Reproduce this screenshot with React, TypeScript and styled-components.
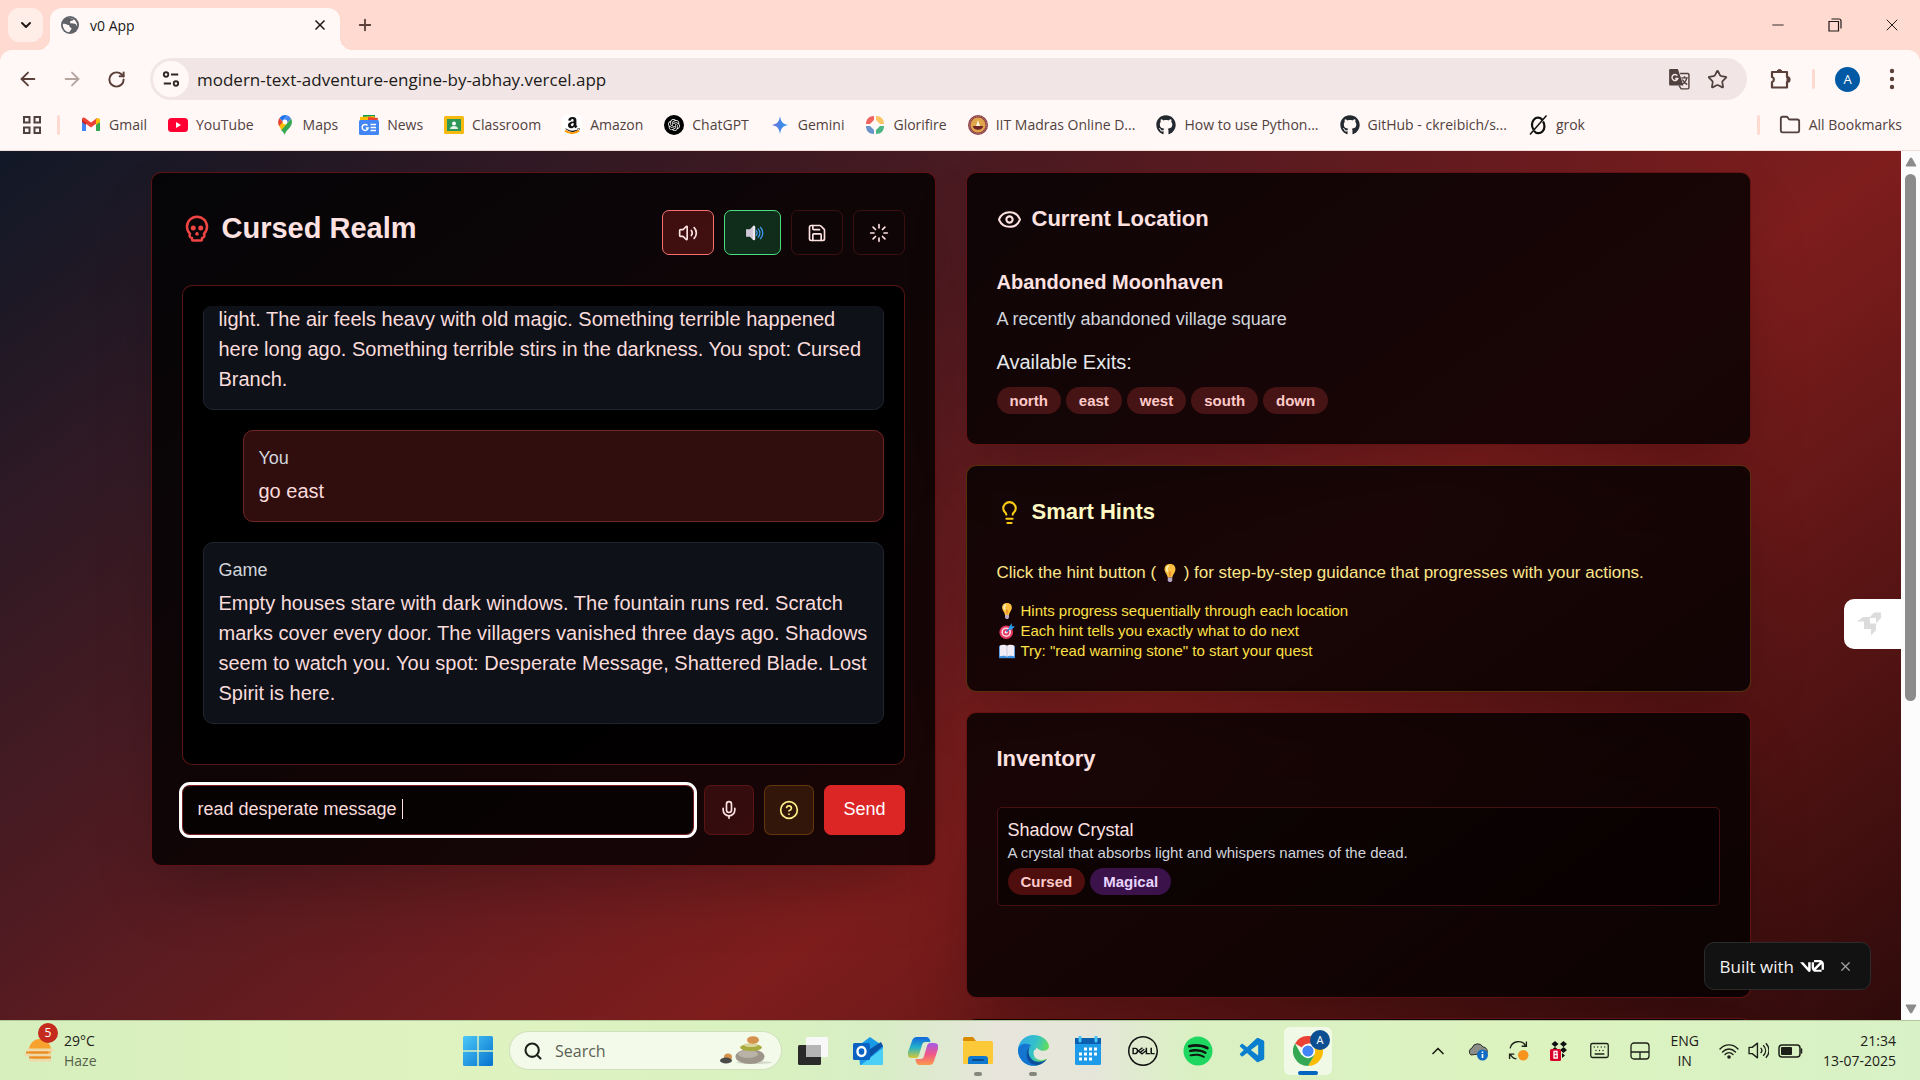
import React from 'react';
import styled, { createGlobalStyle, css } from 'styled-components';
import {
  ArrowLeft, ArrowRight, ChevronDown, ChevronUp, CircleQuestionMark, Eye, Folder, Keyboard, Lightbulb, Loader, Mic,
  Minus, Plus, RotateCw, Save, Search, Skull, Star, Volume2, X,
} from 'lucide-react';
import { FaAmazon, FaGithub, FaSpotify } from 'react-icons/fa';
import { SiDell, SiOpenai } from 'react-icons/si';
import { VscVscode } from 'react-icons/vsc';

const GlobalStyle = createGlobalStyle`
  *, *::before, *::after { box-sizing: border-box; }
  body { margin: 0; overflow: hidden; font-family: "Liberation Sans", Arial, sans-serif; }
  h1, h2, h3, p, ul { margin: 0; padding: 0; }
  ul { list-style: none; }
  button, input { font: inherit; color: inherit; margin: 0; }
  button { padding: 0; border: 0; background: none; cursor: pointer; }
  a { color: inherit; text-decoration: none; }
  svg { display: block; flex: none; }
`;

const uiFont = '"Segoe UI", "Open Sans", "Noto Sans", sans-serif';

const Screen = styled.div`
  height: 100vh;
  display: flex;
  flex-direction: column;
`;

/* ---------- Browser ---------- */

const Browser = styled.header`
  font-family: ${uiFont};
  background: #ffdad1;
  color: #51413e;
`;

const TabStrip = styled.div`
  height: 50px;
  display: flex;
  align-items: flex-end;
  padding-left: 8px;
`;

const TabSearch = styled.button`
  width: 35px;
  height: 34px;
  margin: 0 7px 8px 0;
  border-radius: 11px;
  background: #ffede8;
  color: #201a19;
  display: grid;
  place-items: center;
`;

const Tab = styled.div`
  position: relative;
  width: 290px;
  height: 42px;
  padding: 0 12px 8px 11px;
  border-radius: 12px 12px 0 0;
  background: #fff8f6;
  color: #201a19;
  display: flex;
  align-items: center;
  gap: 11px;
  font-size: 14px;

  &::before, &::after {
    content: '';
    position: absolute;
    bottom: 0;
    width: 12px;
    height: 12px;
  }
  &::before { left: -12px; background: radial-gradient(circle at 0 0, #ffdad1 12px, #fff8f6 12px); }
  &::after { right: -12px; background: radial-gradient(circle at 100% 0, #ffdad1 12px, #fff8f6 12px); }
`;

const TabTitle = styled.span`flex: 1;`;

const PlainButton = styled.button<{ $w?: number; $h?: number }>`
  display: grid;
  place-items: center;
  width: ${(p) => p.$w ?? 44}px;
  height: ${(p) => p.$h ?? 42}px;
`;

const WindowButtons = styled.div`
  margin-left: auto;
  display: flex;
  color: #201a19;
`;

const Toolbar = styled.div`
  height: 58px;
  border-radius: 12px 12px 0 0;
  background: #fff8f6;
  color: #5b403a;
  display: flex;
  align-items: center;
  padding: 0 6px;
`;

const Omnibox = styled.div`
  flex: 1;
  height: 42px;
  margin: 0 11px 0 12px;
  padding: 0 16px 0 3px;
  border-radius: 21px;
  background: #f1e6e5;
  display: flex;
  align-items: center;
  gap: 8px;
`;

const SiteInfo = styled.button`
  width: 36px;
  height: 36px;
  border-radius: 50%;
  background: #fff8f6;
  display: grid;
  place-items: center;
`;

const Address = styled.input`
  flex: 1;
  min-width: 0;
  border: 0;
  outline: 0;
  padding: 0;
  background: transparent;
  color: #201a19;
  font-size: 17px;
`;

const Divider = styled.span`
  width: 3px;
  height: 20px;
  border-radius: 2px;
  background: #ffdad1;
`;

const Account = styled.div`
  display: flex;
  align-items: center;
  gap: 20px;
  padding: 0 10px;
`;

const Profile = styled.button`
  width: 25px;
  height: 25px;
  border-radius: 50%;
  background: #0059a4;
  color: #fff;
  font-size: 13px;
`;

const Bookmarks = styled.nav`
  height: 43px;
  padding: 0 18px 8px 22px;
  background: #fff8f6;
  border-bottom: 1px solid #f3dcd6;
  display: flex;
  align-items: center;
`;

const BookmarkList = styled.div`
  flex: 1;
  display: flex;
  align-items: center;
  gap: 21px;
  margin-left: 15px;
`;

const BookmarkEnd = styled.div`
  display: flex;
  align-items: center;
  gap: 19px;
`;

const Bookmark = styled.a`
  display: flex;
  align-items: center;
  gap: 8px;
  font-size: 14px;
  line-height: 20px;
  white-space: nowrap;
`;

/* ---------- Page ---------- */

const Viewport = styled.div`
  flex: 1;
  min-height: 0;
  display: flex;
  position: relative;
`;

const Realm = styled.main`
  flex: 1;
  overflow: hidden;
  padding: 21px 20px;
  background: linear-gradient(to bottom right, #111827, #7f1d1d, #000) 0 0 / 100% 1378px no-repeat #000;
`;

const Columns = styled.div`
  max-width: 1600px;
  margin: 0 auto;
  display: grid;
  grid-template-columns: 1fr 1fr;
  align-items: start;
  gap: 30px;
`;

const Side = styled.div`
  display: grid;
  gap: 20px;
`;

const Card = styled.section<{ $tone?: 'hint' }>`
  padding: 30px;
  border: 1px solid ${(p) => (p.$tone === 'hint' ? 'rgba(133, 77, 14, 0.6)' : 'rgba(153, 27, 27, 0.6)')};
  border-radius: 10px;
  background: rgba(0, 0, 0, 0.8);
  box-shadow: 0 31px 62px -15px rgba(0, 0, 0, 0.25);
  color: #fee2e2;
`;

const GameHeader = styled.div`
  height: 52px;
  margin-bottom: 30px;
  display: flex;
  justify-content: space-between;
`;

const GameTitle = styled.h1`
  display: flex;
  align-items: center;
  gap: 10px;
  font-size: 29px;
  line-height: 50px;
  height: 50px;
  svg { color: #ef4444; }
`;

const Controls = styled.div`
  display: flex;
  align-items: flex-end;
  gap: 10px;
`;

type Tone = 'idle' | 'on' | 'voice' | 'mic' | 'help' | 'send';

const tones: Record<Tone, ReturnType<typeof css>> = {
  idle: css`border-color: rgba(127, 29, 29, 0.4); color: #fee2e2;`,
  on: css`border-color: #f87171; background: rgba(127, 29, 29, 0.45); color: #fee2e2;`,
  voice: css`border-color: #4ade80; background: rgba(20, 83, 45, 0.5);`,
  mic: css`border-color: rgba(127, 29, 29, 0.5); background: rgba(127, 29, 29, 0.3); color: #fee2e2;`,
  help: css`border-color: rgba(133, 77, 14, 0.6); background: rgba(113, 63, 18, 0.3); color: #fef08a;`,
  send: css`border-color: #dc2626; background: #dc2626; color: #fff;`,
};

const Action = styled.button<{ $tone: Tone; $tall?: boolean }>`
  height: ${(p) => (p.$tall ? 50 : 45)}px;
  padding: 0 ${(p) => (p.$tall ? 14 : 15)}px;
  min-width: ${(p) => (p.$tall ? 50 : 52)}px;
  border: 1px solid transparent;
  border-radius: 7px;
  display: grid;
  place-items: center;
  font-size: 18px;
  ${(p) => tones[p.$tone]}
`;

const SendLabel = styled.span`padding: 0 4px 2px;`;

const Log = styled.div`
  height: 480px;
  padding: 20px;
  border: 1px solid rgba(127, 29, 29, 0.7);
  border-radius: 10px;
  background: rgba(0, 0, 0, 0.9);
  margin-bottom: 20px;
`;

const LogScroller = styled.div`
  height: 100%;
  overflow: hidden;
  border-radius: 8px;
  display: flex;
  flex-direction: column;
  justify-content: flex-end;
  gap: 20px;
  padding-bottom: 20px;
`;

const Message = styled.article<{ $own?: boolean }>`
  flex: none;
  margin-left: ${(p) => (p.$own ? 40 : 0)}px;
  padding: 15px 12px 15px 15px;
  border: 1px solid ${(p) => (p.$own ? '#702626' : '#20262f')};
  border-radius: 10px;
  background: ${(p) => (p.$own ? '#310e0e' : '#0e1118')};
  color: #fadcdc;
  font-size: 20px;
  line-height: 30px;
`;

const Speaker = styled.div`
  margin-bottom: 5px;
  color: #d1d5db;
  font-size: 18px;
  line-height: 25px;
`;

const CommandRow = styled.form`
  display: flex;
  gap: 10px;
`;

const CommandField = styled.div`
  position: relative;
  flex: 1;
  display: flex;
`;

const Command = styled.input`
  width: 100%;
  height: 50px;
  padding: 0 15px 2px;
  border: 1px solid #7f1d1d;
  border-radius: 8px;
  background: rgba(0, 0, 0, 0.6);
  color: #fadcdc;
  font-size: 18px;
  caret-color: transparent;
  outline: 3px solid #fff;
`;

const Caret = styled.span`
  position: absolute;
  left: 220px;
  top: 14px;
  width: 1px;
  height: 20px;
  background: #fee2e2;
`;

const CardTitle = styled.h2<{ $tone?: 'hint' }>`
  display: flex;
  align-items: center;
  gap: 10px;
  margin-bottom: 32px;
  font-size: 22px;
  line-height: 32px;
  color: ${(p) => (p.$tone === 'hint' ? '#fef9c3' : '#fee2e2')};
  svg { color: ${(p) => (p.$tone === 'hint' ? '#facc15' : '#fee2e2')}; }
`;

const Place = styled.h3`
  font-size: 20px;
  line-height: 30px;
  margin-bottom: 10px;
`;

const PlaceText = styled.p`
  font-size: 18px;
  line-height: 25px;
  margin-bottom: 15px;
  color: #d1d5db;
`;

const ExitsLabel = styled.p`
  font-size: 20px;
  line-height: 30px;
  margin-bottom: 10px;
  color: #e5e7eb;
`;

const Badges = styled.div`
  display: flex;
  gap: 5px;
`;

const Badge = styled.span<{ $tone?: 'cursed' | 'magic' }>`
  padding: 0 13px;
  border-radius: 14px;
  font-size: 15px;
  font-weight: 700;
  line-height: 27px;
  background: ${(p) => (p.$tone === 'cursed' ? '#4f0e0e' : p.$tone === 'magic' ? '#3b1249' : '#471415')};
  color: ${(p) => (p.$tone === 'magic' ? '#e9d5ff' : '#fecaca')};
`;

const HintText = styled.p`
  display: flex;
  align-items: center;
  font-size: 17px;
  line-height: 26px;
  margin-bottom: 15px;
  color: #fde68a;
  white-space: pre;
`;

const HintItem = styled.li`
  display: flex;
  align-items: center;
  gap: 6px;
  padding-left: 2px;
  font-size: 15px;
  line-height: 20px;
  color: #fde047;
`;

const Items = styled.div`min-height: 160px;`;

const Item = styled.article`
  padding: 10px;
  border: 1px solid rgba(127, 29, 29, 0.5);
  border-radius: 5px;
  background: rgba(0, 0, 0, 0.4);
`;

const ItemName = styled.h3`
  font-size: 18px;
  font-weight: 400;
  line-height: 25px;
`;

const ItemText = styled.p`
  margin-bottom: 5px;
  font-size: 15px;
  line-height: 20px;
  color: #d1d5db;
`;

const Scrollbar = styled.div`
  width: 19px;
  background: #fcfcfc;
  color: #8b8b8b;
  display: flex;
  flex-direction: column;
  align-items: center;
  padding: 6px 0;
`;

const ScrollTrack = styled.div`
  flex: 1;
  padding: 7px 0 6px;
`;

const ScrollThumb = styled.div`
  width: 11px;
  height: 64%;
  border-radius: 6px;
  background: #8b8b8b;
`;

const RocketTab = styled.button`
  position: absolute;
  right: 19px;
  top: 448px;
  width: 57px;
  height: 50px;
  border-radius: 10px 0 0 10px;
  background: #fff;
  display: grid;
  place-items: center start;
  padding-left: 13px;
`;

const BuiltWith = styled.div`
  position: absolute;
  right: 49px;
  bottom: 30px;
  height: 48px;
  padding: 0 17px 0 15px;
  border: 1px solid #2b2b2b;
  border-radius: 10px;
  background: #121212;
  color: #f2f2f2;
  font-family: ${uiFont};
  font-size: 17px;
  display: flex;
  align-items: center;
  gap: 6px;
`;

const Dismiss = styled.button`
  margin-left: 8px;
  color: #a0a0a0;
`;

/* ---------- Taskbar ---------- */

const Taskbar = styled.footer`
  height: 60px;
  border-top: 1px solid #b3c79c;
  background: linear-gradient(90deg, #d6efbd 0, #dff3c0 22%, #d9f1c0 40%, #d8edc6 46%, #e7e5dc 52%, #e5e6d9 57%, #daf0c3 62%, #dcf3bf 80%, #d8f1c6 100%);
  font-family: ${uiFont};
  font-size: 14px;
  line-height: 20px;
  color: #1d2018;
  display: grid;
  grid-template: 59px / 454px 1fr auto;
  align-items: center;
`;

const Weather = styled.button`
  justify-self: start;
  display: flex;
  align-items: center;
  gap: 8px;
  padding-left: 24px;
  text-align: left;
`;

const WeatherIcon = styled.span`position: relative;`;

const Count = styled.span`
  position: absolute;
  left: 14px;
  top: -12px;
  width: 20px;
  height: 20px;
  border-radius: 50%;
  background: #c42b1c;
  color: #fff;
  font-size: 12px;
  text-align: center;
`;

const Muted = styled.span`color: #55604a;`;

const Apps = styled.div`
  display: flex;
  align-items: center;
  gap: 7px;
`;

const AppButton = styled.button<{ $active?: boolean; $open?: boolean }>`
  position: relative;
  width: 48px;
  height: 48px;
  border-radius: 6px;
  background: ${(p) => (p.$active ? 'rgba(255, 255, 255, 0.6)' : 'transparent')};
  display: grid;
  place-items: center;

  ${(p) =>
    (p.$active || p.$open) &&
    css`
      &::after {
        content: '';
        position: absolute;
        left: 50%;
        bottom: ${p.$active ? 0 : -1}px;
        width: ${p.$active ? 20 : 8}px;
        height: 4px;
        border-radius: 2px;
        transform: translateX(-50%);
        background: ${p.$active ? '#0067c0' : '#83877c'};
      }
    `}
`;

const ProfileBadge = styled.span`
  position: absolute;
  right: 2px;
  top: 3px;
  width: 20px;
  height: 20px;
  border-radius: 50%;
  background: #0b4f92;
  color: #fff;
  font-size: 11px;
`;

const SearchPill = styled.label`
  width: 273px;
  height: 39px;
  padding: 0 9px 0 13px;
  border: 1px solid #cfe0ba;
  border-radius: 20px;
  background: #f4faea;
  display: flex;
  align-items: center;
  gap: 12px;
`;

const SearchInput = styled.input`
  flex: 1;
  min-width: 0;
  padding: 0;
  border: 0;
  outline: 0;
  background: transparent;
  font-size: 16px;
  &::placeholder { color: #5b6154; opacity: 1; }
`;

const Tray = styled.div`
  display: flex;
  align-items: center;
  gap: 20px;
  padding-right: 24px;
`;

const TrayGroup = styled.div`
  display: flex;
  align-items: center;
  gap: 9px;
`;

const TwoLines = styled.div<{ $end?: boolean }>`
  text-align: ${(p) => (p.$end ? 'right' : 'center')};
  white-space: pre;
`;

/* ---------- Drawings ---------- */

const Svg = ({ w = 20, h, vb = '0 0 20 20', children }: { w?: number; h?: number; vb?: string; children: React.ReactNode }) => (
  <svg width={w} height={h ?? w} viewBox={vb} fill="none" aria-hidden="true">{children}</svg>
);

const Globe = () => (
  <Svg w={18}>
    <circle cx="10" cy="10" r="10" fill="#5f6368" />
    <path d="M2 9c3-1 4 1 6 1s1 3 3 3-1 4-2 5C5 18 2 14 2 9zM8 2c2 0 5 0 6 2-1 2-4 1-4 3s4 1 6 2 1 3 2 2c0-5-4-9-10-9z" fill="#fff8f6" />
  </Svg>
);

const Gmail = () => (
  <Svg>
    <path d="M1 5v11h4V8z" fill="#4285f4" /><path d="M15 8v8h4V5z" fill="#34a853" />
    <path d="M1 6V4c0-1.600 2-2 3-1l6 4.500L16 3v5l-6 4.500L4 8z" fill="#ea4335" />
    <path d="M15 4c1.500-1.500 4-1 4 1v2l-4 3z" fill="#fbbc04" /><path d="M1 5l4 3v2L1 7z" fill="#c5221f" />
  </Svg>
);
const YouTube = () => (
  <Svg><rect y="3" width="20" height="14" rx="3.500" fill="#ff0033" /><path d="M8 7l5 3-5 3z" fill="#fff" /></Svg>
);
const Maps = () => (
  <Svg>
    <path d="M10 20c0-5 7-7 7-13a7 7 0 0 0-1-3.500L6 15c2 2 3 3 4 5z" fill="#34a853" />
    <path d="M4 10c.5 2 1.500 3.500 2.500 5L14 6l-4-2z" fill="#fbbc04" />
    <path d="M4.500 3L8 7l-4 4C2.500 8 3 5 4.500 3z" fill="#ea4335" />
    <path d="M4.500 3A7 7 0 0 1 12 .3L7.500 6z" fill="#1a73e8" /><path d="M12 .3a7 7 0 0 1 4 3.200L12 8 8.500 5z" fill="#4285f4" />
    <circle cx="10" cy="7" r="2.400" fill="#fff" />
  </Svg>
);
const News = () => (
  <Svg>
    <path d="M4 0h12v6H4z" fill="#0c9d58" /><path d="M1 2l14-1 3 5H1z" fill="#fbbc04" /><path d="M9 2l10 1-1 5H9z" fill="#ea4335" />
    <rect y="5" width="20" height="15" rx="1.500" fill="#4285f4" />
    <path d="M8.500 10.500a3 3 0 1 0 .6 2.500H6.800M11.500 9.500H17M11.500 12.500H17M11.500 15.500H17" stroke="#fff" strokeWidth="1.500" />
  </Svg>
);
const Classroom = () => (
  <Svg>
    <rect y="1" width="20" height="18" rx="1.500" fill="#f5b912" /><rect x="3" y="4" width="14" height="12" fill="#2e9957" />
    <circle cx="10" cy="8.500" r="1.900" fill="#fff" /><path d="M6 14c0-4 8-4 8 0z" fill="#e6f4ea" />
  </Svg>
);
const ChatGpt = () => (
  <Svg><circle cx="10" cy="10" r="10" fill="#000" /><g color="#fff"><SiOpenai x="4" y="4" size={12} /></g></Svg>
);
const Gemini = () => (
  <Svg>
    <defs><linearGradient id="gem" x1="0" y1="10" x2="20" y2="10" gradientUnits="userSpaceOnUse"><stop stopColor="#8a6bd8" /><stop offset=".6" stopColor="#3b8be8" /><stop offset="1" stopColor="#4cb0f0" /></linearGradient></defs>
    <path d="M10 1c.8 6 3 8.200 9 9-6 .8-8.200 3-9 9-.8-6-3-8.200-9-9 6-.8 8.200-3 9-9z" fill="url(#gem)" />
  </Svg>
);
const Glorifire = () => (
  <Svg>
    <path d="M9 1v4L5 9H1c0-5 3-8 8-8z" fill="#ee6560" /><path d="M11 1c5 0 8 3 8 8h-4l-4-4z" fill="#fbc566" />
    <path d="M1 11h4l4 4v4c-5 0-8-3-8-8z" fill="#6993c9" /><path d="M19 11c0 5-3 8-8 8v-4l4-4z" fill="#4cb581" />
  </Svg>
);
const Iit = () => (
  <Svg>
    <circle cx="10" cy="10" r="10" fill="#8c3f45" /><circle cx="10" cy="10" r="7.500" fill="#e0a54a" />
    <path d="M5 11h10c0 5-10 5-10 0z" fill="#702427" /><path d="M8 11l2-6 2 6z" fill="#fff3d8" /><circle cx="10" cy="10" r="8.500" stroke="#c9908a" strokeDasharray="1 1" />
  </Svg>
);
const Grok = () => (
  <Svg>
    <path d="M14.500 5A5.500 6.500 0 0 0 5.500 14.500M6 15.800A5.500 6.500 0 0 0 15 6.500" stroke="#111" strokeWidth="2.200" />
    <path d="M2 19.500L18.500 .5" stroke="#111" strokeWidth="1.500" />
  </Svg>
);
const AmazonIcon = () => (
  <Svg><rect width="20" height="20" rx="4" fill="#fff" /><g color="#111"><FaAmazon x="2" y="1" size={17} /></g><path d="M3 15.500c4 3.500 10 3.500 14 0" stroke="#f90" strokeWidth="2" /></Svg>
);

const AppsGrid = () => (
  <Svg><path d="M2 2h5.500v5.500H2zM12.500 2H18v5.500h-5.500zM2 12.500h5.500V18H2zM12.500 12.500H18V18h-5.500z" stroke="#51413e" strokeWidth="2" /></Svg>
);
const Tune = () => (
  <Svg w={18}><g stroke="#2f2523" strokeWidth="2"><circle cx="4.500" cy="5" r="2.500" /><path d="M10 5h8M2 15h8" /><circle cx="15.500" cy="15" r="2.500" /></g></Svg>
);
const Translate = () => (
  <Svg w={22}>
    <path d="M2 1h7l5 15H2a1 1 0 0 1-1-1V2a1 1 0 0 1 1-1z" fill="#51413e" />
    <path d="M8.500 7a2.700 2.700 0 1 0 .4 2.500H6.500" stroke="#f1e6e5" strokeWidth="1.300" />
    <path d="M11 5h7a1 1 0 0 1 1 1v12a1 1 0 0 1-1 1h-6l-2-3M12 9h6M15 7.500V9M17 9c-.5 3-2.500 5-4.500 6M13 10.500c1 2 2.500 3.500 4.500 4.500" stroke="#51413e" strokeWidth="1.300" />
  </Svg>
);
const Puzzle = () => (
  <Svg w={24} vb="0 0 24 24">
    <path d="M4 5h15v5a2.300 2.300 0 0 1 0 5v5.500H4V15a2.600 2.600 0 0 0 0-5z" stroke="#5b403a" strokeWidth="2.200" strokeLinejoin="round" />
    <path d="M9 5a2.500 2.500 0 0 1 5 0zM19 10a2.500 2.500 0 0 1 0 5z" fill="#5b403a" stroke="#5b403a" />
  </Svg>
);
const Dots = () => (
  <Svg w={24} vb="0 0 24 24"><g fill="#5b403a"><circle cx="12" cy="4" r="2.200" /><circle cx="12" cy="12" r="2.200" /><circle cx="12" cy="20" r="2.200" /></g></Svg>
);
const Restore = () => (
  <Svg w={14} vb="0 0 14 14"><path d="M1 3.500h9.500V13H1zM3.500 1H11a2 2 0 0 1 2 2v7.500" stroke="#201a19" strokeWidth="1.200" /></Svg>
);

const Speaker3d = () => (
  <Svg w={25} h={20} vb="-4 -2 33 24">
    <path d="M4 5h5l4-4c2-1.500 3 0 3 1v16c0 1-1 2.500-3 1l-4-4H4z" fill="#cfc6d6" />
    <path d="M13 1c2-1.500 3 0 3 1v16c0 1-1 2.500-3 1z" fill="#ece7f1" />
    <path d="M17.500 7c1.500 1.500 1.500 4.500 0 6M20 4.500c3 3 3 8 0 11M23 2.500c4 4 4 11 0 15" stroke="#3f9bf2" strokeWidth="1.700" strokeLinecap="round" />
  </Svg>
);
const Bulb = ({ size = 16 }: { size?: number }) => (
  <Svg w={size}>
    <path d="M10 0c4.500 0 6.500 3 6 7-.5 3-3 4.500-3.500 8h-5C7 11.500 4.500 10 4 7c-.5-4 1.500-7 6-7z" fill="#fdbf3f" />
    <path d="M8 2.500C6 4 6 7 7.500 8" stroke="#fff2b8" strokeWidth="2" strokeLinecap="round" /><path d="M9 8l1 6 1-6" stroke="#e98b2a" />
    <path d="M7.500 15h5v3.500L11 20H9l-1.500-1.500z" fill="#b7a9c6" />
  </Svg>
);
const Target = () => (
  <Svg w={16}>
    <circle cx="9" cy="11.500" r="8.500" fill="#e8375f" /><circle cx="9" cy="11.500" r="6" fill="#f6dbe8" /><circle cx="9" cy="11.500" r="4" fill="#e8375f" /><circle cx="9" cy="11.500" r="1.700" fill="#fff" />
    <path d="M9 11.500L16 4" stroke="#1c72c9" strokeWidth="1.500" /><path d="M12.500 5L16 0v4l4 .5-4.500 4-3-.5z" fill="#2b9df0" />
  </Svg>
);
const Book = () => (
  <Svg w={16}>
    <path d="M0 4h20v15H0z" fill="#3d8fe0" /><path d="M1 3c3-1 7-1 9 .5V17c-2-1.500-6-1.500-9-.5zM19 3c-3-1-7-1-9 .5V17c2-1.500 6-1.500 9-.5z" fill="#f1ebf6" /><path d="M10 3.500V17" stroke="#c7bdd6" />
  </Svg>
);
const Rocket = () => (
  <Svg w={24} vb="0 0 24 24">
    <path fillRule="evenodd" d="M0 9.500L6 5h7l4-4.500h7V6l-5 5.500V18l-5 5.500V17H7v-7.500zM13 6v5.500h6V6z" fill="#dcdcdc" />
  </Svg>
);
const V0 = () => (
  <Svg w={24} h={12} vb="0 0 40 20">
    <g fill="#fff">
      <path d="M23.400 0h9.500a7 7 0 0 1 7 7v9.100H36V7l-.01-.3-9.530 9.380H36v3.700h-9.440a7.050 7.050 0 0 1-7.080-7.030V3.690h3.910v9.060l.04.520 9.740-9.570-.25-.01H23.400z" />
      <path d="M13.770 19.100L0 3.690h5.540l8.080 9.040V3.690h4.130v13.880c0 2.100-2.590 3.090-3.980 1.530z" />
    </g>
  </Svg>
);

const WeatherArt = () => (
  <Svg w={32} h={32} vb="0 0 32 32">
    <circle cx="16" cy="15" r="11" fill="#f7a12f" />
    <path d="M4 15h24M2 20h24M7 25h19" stroke="#f0d9a8" strokeWidth="3" strokeLinecap="round" /><path d="M2 17.500h22M5 22.500h22" stroke="#e98a24" strokeWidth="2" />
  </Svg>
);
const StartIcon = () => (
  <Svg w={30} vb="0 0 30 30">
    <defs><linearGradient id="win" x1="0" y1="0" x2="1" y2="1"><stop stopColor="#4cc8f8" /><stop offset="1" stopColor="#0572cd" /></linearGradient></defs>
    <rect width="30" height="30" rx="1.500" fill="url(#win)" /><path d="M15 0v30M0 15h30" stroke="#d9f1c0" strokeWidth="1.500" />
  </Svg>
);
const Pebbles = () => (
  <Svg w={54} h={30} vb="0 0 54 30">
    <ellipse cx="36" cy="26.500" rx="18" ry="1.500" fill="#d5d9c9" />
    <ellipse cx="32" cy="20.500" rx="14.500" ry="7.500" fill="#9d958a" /><ellipse cx="30" cy="18" rx="10" ry="4" fill="#b9b2a6" />
    <ellipse cx="33" cy="11.500" rx="11" ry="3.500" fill="#a8ab3d" /><ellipse cx="33" cy="9" rx="7" ry="2" fill="#d8d49b" /><ellipse cx="35" cy="4" rx="6" ry="3.800" fill="#d4924c" />
    <ellipse cx="10" cy="21" rx="4" ry="3.500" fill="#d4924c" /><ellipse cx="8" cy="24.500" rx="6" ry="3" fill="#4a4a48" />
  </Svg>
);
const TaskView = () => (
  <Svg w={30} vb="0 0 30 30"><rect x="0" y="9" width="23" height="20" rx="1.500" fill="#2a2a2a" /><rect x="8" y="1" width="22" height="20" rx="1.500" fill="#f8f8f8" /><path d="M8 9h15v12H8z" fill="#b5b5b5" /></Svg>
);
const Outlook = () => (
  <Svg w={30} vb="0 0 30 30">
    <path d="M5 10L17 1l13 9v17a2 2 0 0 1-2 2H7z" fill="#1a9be8" /><path d="M14 15L28 6l2 4-14 12z" fill="#0a52a8" /><path d="M8 29l22-17v15a2 2 0 0 1-2 2z" fill="#4ad0f7" />
    <rect y="7" width="17" height="17" rx="1.500" fill="#0a63c2" /><ellipse cx="8.500" cy="15.500" rx="4" ry="4.500" stroke="#fff" strokeWidth="2.400" />
  </Svg>
);
const Copilot = () => (
  <Svg w={30} vb="0 0 30 30">
    <defs>
      <linearGradient id="cpa" x1="0" y1="0" x2="0" y2="1"><stop stopColor="#1166dd" /><stop offset=".5" stopColor="#23b2c8" /><stop offset="1" stopColor="#d8c834" /></linearGradient>
      <linearGradient id="cpb" x1="0" y1="0" x2="0" y2="1"><stop stopColor="#a45be8" /><stop offset=".5" stopColor="#f0568a" /><stop offset="1" stopColor="#fb9a4a" /></linearGradient>
    </defs>
    <path d="M9 1h9c3 0 4 2 4.500 5h-5c-2 0-3 1-3.500 3l-3 10c-.7 2.500-2 3-4 3H4c-4 0-5-3-4-6L4 5c1-3 2.500-4 5-4z" fill="url(#cpa)" />
    <path d="M21 29h-9c-3 0-4-2-4.500-6h5c2 0 3-1 3.500-3l3-10c.7-2.500 2-3 4-3h3c4 0 5 3 4 6l-4 12c-1 3-2.500 4-5 4z" fill="url(#cpb)" />
  </Svg>
);
const Explorer = () => (
  <Svg w={30} vb="0 0 30 30">
    <path d="M0 3a2 2 0 0 1 2-2h8l3 4H0z" fill="#d98b00" /><rect y="5" width="30" height="23" rx="1.500" fill="#fcc938" />
    <path d="M5 28v-5a3 3 0 0 1 3-3h14a3 3 0 0 1 3 3v5z" fill="#0f79d0" /><path d="M10 24h10" stroke="#0b4a8f" strokeWidth="2" strokeLinecap="round" />
  </Svg>
);
const Edge = () => (
  <Svg w={31} vb="0 0 30 30">
    <defs><linearGradient id="edg" x1="0" y1="0" x2="30" y2="10" gradientUnits="userSpaceOnUse"><stop stopColor="#2fa8ea" /><stop offset=".6" stopColor="#35c1c8" /><stop offset="1" stopColor="#62de55" /></linearGradient></defs>
    <path d="M15 0A15 15 0 0 0 0 15a15 15 0 0 0 20 14c4-1.500 7-4 8-6-6 3-13 1-13-6 0-3 3-3 3-5 4 5 12 4 12-1C29 4 22 0 15 0z" fill="url(#edg)" />
    <path d="M0 15C0 8 8 7 13 10c-5 2-6 8-3 13 2 4 6 6 10 6A15 15 0 0 1 0 15z" fill="#1474d2" />
    <path d="M12 11c-4 5-1 15 8 15 4 0 7-2 8-3-4 7-13 8-17 3-4-4-4-12 1-15z" fill="#0c4f9e" />
  </Svg>
);
const Calendar = () => (
  <Svg w={30} vb="0 0 30 30">
    <rect x="2" y="2" width="26" height="27" rx="1.500" fill="#1e9be8" /><path d="M2 2h26v6H2z" fill="#0b5fae" /><path d="M7 0v5M23 0v5" stroke="#46c3f5" strokeWidth="3" strokeLinecap="round" />
    <path d="M11 13h3M16 13h3M21 13h3M6 18h3M11 18h3M16 18h3M21 18h3M6 23h3M11 23h3M16 23h3" stroke="#fff" strokeWidth="3" />
  </Svg>
);
const Spotify = () => (
  <Svg w={30} vb="0 0 30 30"><circle cx="15" cy="15" r="13" fill="#101510" /><g color="#1ed760"><FaSpotify size={30} /></g></Svg>
);
const Chrome = () => (
  <Svg w={30} vb="0 0 30 30">
    <path d="M15 15L2 7.500A15 15 0 0 1 28 7.500H15z" fill="#ea4335" /><path d="M15 15l13-7.500A15 15 0 0 1 15 30l6.500-11z" fill="#fbbc04" /><path d="M15 15l6.500 4L15 30A15 15 0 0 1 2 7.500L8.500 19z" fill="#34a853" />
    <circle cx="15" cy="15" r="7.200" fill="#fff" /><circle cx="15" cy="15" r="5.600" fill="#4285f4" />
  </Svg>
);
const OneDrive = () => (
  <Svg>
    <path d="M3 14a4 4 0 0 1 1-7 6 6 0 0 1 11-1c3 0 5 3 4 6z" fill="#8a8d88" stroke="#2c2e29" /><circle cx="14.500" cy="14" r="5.500" fill="#0f6cc4" /><path d="M14.500 10.500v1.500M14.500 13v4" stroke="#fff" strokeWidth="1.600" />
  </Svg>
);
const Sync = () => (
  <Svg w={21}>
    <path d="M2 8a8 8 0 0 1 15-2M17.500 1.500V6H13M2 13a8 8 0 0 0 6 5M1.500 18v-4.500H6" stroke="#1d2018" strokeWidth="1.300" /><circle cx="14.500" cy="14.500" r="5" fill="#f7941d" />
  </Svg>
);
const Dropbox = () => (
  <Svg>
    <path d="M6 0l3.500 3L6 6 2.500 3zM14.500 0L18 3l-3.500 3L11 3zM6 6l3.500 3L6 12 2.500 9zM14.500 6L18 9l-3.500 3L11 9zM13 12l3 2.500-3 2.500z" fill="#111" />
    <rect x="1" y="8" width="11" height="12" rx="1.500" fill="#d8002b" /><path d="M5 10.500h3v3H5zM5 13.500h3.200v3.500H5z" stroke="#fff" strokeWidth="1.300" />
  </Svg>
);
const Touchpad = () => (
  <Svg><rect x="1" y="2" width="18" height="16" rx="3" stroke="#1d2018" strokeWidth="1.300" /><path d="M1 11h18M10 11v7" stroke="#1d2018" strokeWidth="1.300" /></Svg>
);
const Wifi = () => (
  <Svg><g stroke="#1d2018" strokeWidth="1.400" strokeLinecap="round"><path d="M1 8c5-5.500 13-5.500 18 0M3.500 11c4-4 9-4 13 0M6 13.500c2.500-2.500 5.500-2.500 8 0" /></g><circle cx="10" cy="16" r="1.800" fill="#1d2018" /></Svg>
);
const Sound = () => (
  <Svg w={21}><path d="M1 7h3l5-4v14l-5-4H1zM12 7.500c1.500 1.500 1.500 3.500 0 5M14.500 5c3 3 3 7 0 10M17 3c4 4 4 10 0 14" stroke="#1d2018" strokeWidth="1.300" strokeLinejoin="round" /></Svg>
);
const Battery = () => (
  <Svg w={25} h={14} vb="0 0 25 14"><rect x="1" y="1" width="21" height="12" rx="3" stroke="#1d2018" strokeWidth="1.500" /><rect x="3" y="3" width="11" height="8" rx="1" fill="#1d2018" /><path d="M23.500 5v4" stroke="#1d2018" strokeWidth="1.500" strokeLinecap="round" /></Svg>
);
const Triangle = ({ down }: { down?: boolean }) => (
  <Svg w={12} h={10} vb="0 0 12 10"><path d={down ? 'M1 1h10L6.500 9h-1z' : 'M1 9h10L6.500 1h-1z'} fill="#8b8b8b" stroke="#8b8b8b" strokeLinejoin="round" /></Svg>
);

const bookmarks: [string, React.ReactNode][] = [
  ['Gmail', <Gmail />],
  ['YouTube', <YouTube />],
  ['Maps', <Maps />],
  ['News', <News />],
  ['Classroom', <Classroom />],
  ['Amazon', <AmazonIcon />],
  ['ChatGPT', <ChatGpt />],
  ['Gemini', <Gemini />],
  ['Glorifire', <Glorifire />],
  ['IIT Madras Online D...', <Iit />],
  ['How to use Python...', <FaGithub size={20} color="#24292f" />],
  ['GitHub - ckreibich/s...', <FaGithub size={20} color="#24292f" />],
  ['grok', <Grok />],
];

/* The log is scrolled to the end, so the oldest entry holds only its closing lines. */
const messages: { from?: string; text: string }[] = [
  {
    text: 'light. The air feels heavy with old magic. Something terrible happened here long ago. Something terrible stirs in the darkness. You spot: Cursed Branch.',
  },
  { from: 'You', text: 'go east' },
  {
    from: 'Game',
    text: 'Empty houses stare with dark windows. The fountain runs red. Scratch marks cover every door. The villagers vanished three days ago. Shadows seem to watch you. You spot: Desperate Message, Shattered Blade. Lost Spirit is here.',
  },
];

const exits = ['north', 'east', 'west', 'south', 'down'];

const apps: { name: string; icon: React.ReactNode; open?: boolean }[] = [
  { name: 'Task view', icon: <TaskView /> },
  { name: 'Outlook', icon: <Outlook /> },
  { name: 'Copilot', icon: <Copilot /> },
  { name: 'File Explorer', icon: <Explorer />, open: true },
  { name: 'Edge', icon: <Edge />, open: true },
  { name: 'Calendar', icon: <Calendar /> },
  { name: 'Dell', icon: <SiDell size={30} color="#111" /> },
  { name: 'Spotify', icon: <Spotify /> },
  { name: 'Visual Studio Code', icon: <VscVscode size={30} color="#0a7fd0" /> },
];

const BrowserChrome = () => (
  <Browser>
    <TabStrip>
      <TabSearch aria-label="Search tabs"><ChevronDown size={16} strokeWidth={3} /></TabSearch>
      <Tab>
        <Globe />
        <TabTitle>v0 App</TabTitle>
        <button aria-label="Close tab"><X size={16} strokeWidth={2.5} /></button>
      </Tab>
      <PlainButton $w={50} $h={50} aria-label="New tab"><Plus size={18} color="#5b403a" strokeWidth={2.5} /></PlainButton>
      <WindowButtons>
        <PlainButton $w={57} $h={50} aria-label="Minimize"><Minus size={18} strokeWidth={1.2} /></PlainButton>
        <PlainButton $w={57} $h={50} aria-label="Restore"><Restore /></PlainButton>
        <PlainButton $w={57} $h={50} aria-label="Close"><X size={20} strokeWidth={1.2} /></PlainButton>
      </WindowButtons>
    </TabStrip>
    <Toolbar>
      <PlainButton aria-label="Back"><ArrowLeft size={22} /></PlainButton>
      <PlainButton aria-label="Forward"><ArrowRight size={22} color="#b5a5a1" /></PlainButton>
      <PlainButton aria-label="Reload"><RotateCw size={19} strokeWidth={2.5} /></PlainButton>
      <Omnibox>
        <SiteInfo aria-label="Site information"><Tune /></SiteInfo>
        <Address aria-label="Address" defaultValue="modern-text-adventure-engine-by-abhay.vercel.app" />
        <PlainButton $w={32} aria-label="Translate"><Translate /></PlainButton>
        <PlainButton $w={28} aria-label="Bookmark this page"><Star size={21} color="#51413e" /></PlainButton>
      </Omnibox>
      <PlainButton aria-label="Extensions"><Puzzle /></PlainButton>
      <Account>
        <Divider />
        <Profile aria-label="Profile">A</Profile>
      </Account>
      <PlainButton aria-label="Menu"><Dots /></PlainButton>
    </Toolbar>
    <Bookmarks aria-label="Bookmarks">
      <AppsGrid />
      <BookmarkList>
        <Divider />
        {bookmarks.map(([name, icon]) => (
          <Bookmark href="#" key={name}>{icon}{name}</Bookmark>
        ))}
      </BookmarkList>
      <BookmarkEnd>
        <Divider />
        <Bookmark href="#"><Folder size={22} />All Bookmarks</Bookmark>
      </BookmarkEnd>
    </Bookmarks>
  </Browser>
);

const GamePanel = () => (
  <Card>
    <GameHeader>
      <GameTitle><Skull size={30} />Cursed Realm</GameTitle>
      <Controls>
        <Action $tone="on" aria-label="Sound"><Volume2 size={20} /></Action>
        <Action $tone="voice" aria-label="Narration"><Speaker3d /></Action>
        <Action $tone="idle" aria-label="Save"><Save size={20} /></Action>
        <Action $tone="idle" aria-label="Effects"><Loader size={20} /></Action>
      </Controls>
    </GameHeader>
    <Log>
      <LogScroller>
        {messages.map((m, i) => (
          <Message key={i} $own={m.from === 'You'}>
            {m.from && <Speaker>{m.from}</Speaker>}
            {m.text}
          </Message>
        ))}
      </LogScroller>
    </Log>
    <CommandRow onSubmit={(e) => e.preventDefault()}>
      <CommandField>
        <Command aria-label="Command" defaultValue="read desperate message " />
        <Caret />
      </CommandField>
      <Action type="button" $tone="mic" $tall aria-label="Speak"><Mic size={20} /></Action>
      <Action type="button" $tone="help" $tall aria-label="Hint"><CircleQuestionMark size={20} /></Action>
      <Action $tone="send" $tall><SendLabel>Send</SendLabel></Action>
    </CommandRow>
  </Card>
);

const SidePanels = () => (
  <Side>
    <Card>
      <CardTitle><Eye size={25} />Current Location</CardTitle>
      <Place>Abandoned Moonhaven</Place>
      <PlaceText>A recently abandoned village square</PlaceText>
      <ExitsLabel>Available Exits:</ExitsLabel>
      <Badges>{exits.map((e) => <Badge key={e}>{e}</Badge>)}</Badges>
    </Card>
    <Card $tone="hint">
      <CardTitle $tone="hint"><Lightbulb size={25} />Smart Hints</CardTitle>
      <HintText>{'Click the hint button ( '}<Bulb size={18} />{' ) for step-by-step guidance that progresses with your actions.'}</HintText>
      <ul>
        <HintItem><Bulb />Hints progress sequentially through each location</HintItem>
        <HintItem><Target />Each hint tells you exactly what to do next</HintItem>
        <HintItem><Book />Try: "read warning stone" to start your quest</HintItem>
      </ul>
    </Card>
    <Card>
      <CardTitle>Inventory</CardTitle>
      <Items>
        <Item>
          <ItemName>Shadow Crystal</ItemName>
          <ItemText>A crystal that absorbs light and whispers names of the dead.</ItemText>
          <Badges><Badge $tone="cursed">Cursed</Badge><Badge $tone="magic">Magical</Badge></Badges>
        </Item>
      </Items>
    </Card>
    <Card />
  </Side>
);

const SystemTaskbar = () => (
  <Taskbar>
    <Weather>
      <WeatherIcon><WeatherArt /><Count>5</Count></WeatherIcon>
      <span>29°C<br /><Muted>Haze</Muted></span>
    </Weather>
    <Apps>
      <AppButton aria-label="Start"><StartIcon /></AppButton>
      <SearchPill>
        <Search size={20} strokeWidth={2.5} />
        <SearchInput placeholder="Search" aria-label="Search" />
        <Pebbles />
      </SearchPill>
      {apps.map((a) => (
        <AppButton key={a.name} aria-label={a.name} $open={a.open}>{a.icon}</AppButton>
      ))}
      <AppButton aria-label="Chrome" $active><Chrome /><ProfileBadge>A</ProfileBadge></AppButton>
    </Apps>
    <Tray>
      <ChevronUp size={20} />
      <OneDrive />
      <Sync />
      <Dropbox />
      <Keyboard size={21} strokeWidth={1.5} />
      <Touchpad />
      <TwoLines>{'ENG\nIN'}</TwoLines>
      <TrayGroup><Wifi /><Sound /><Battery /></TrayGroup>
      <TwoLines $end>{'21:34\n13-07-2025'}</TwoLines>
    </Tray>
  </Taskbar>
);

export default function App() {
  return (
    <Screen>
      <GlobalStyle />
      <BrowserChrome />
      <Viewport>
        <Realm>
          <Columns>
            <GamePanel />
            <SidePanels />
          </Columns>
        </Realm>
        <Scrollbar>
          <Triangle />
          <ScrollTrack><ScrollThumb /></ScrollTrack>
          <Triangle down />
        </Scrollbar>
        <RocketTab aria-label="Launch"><Rocket /></RocketTab>
        <BuiltWith>
          Built with <V0 />
          <Dismiss aria-label="Dismiss"><X size={15} strokeWidth={2} /></Dismiss>
        </BuiltWith>
      </Viewport>
      <SystemTaskbar />
    </Screen>
  );
}
